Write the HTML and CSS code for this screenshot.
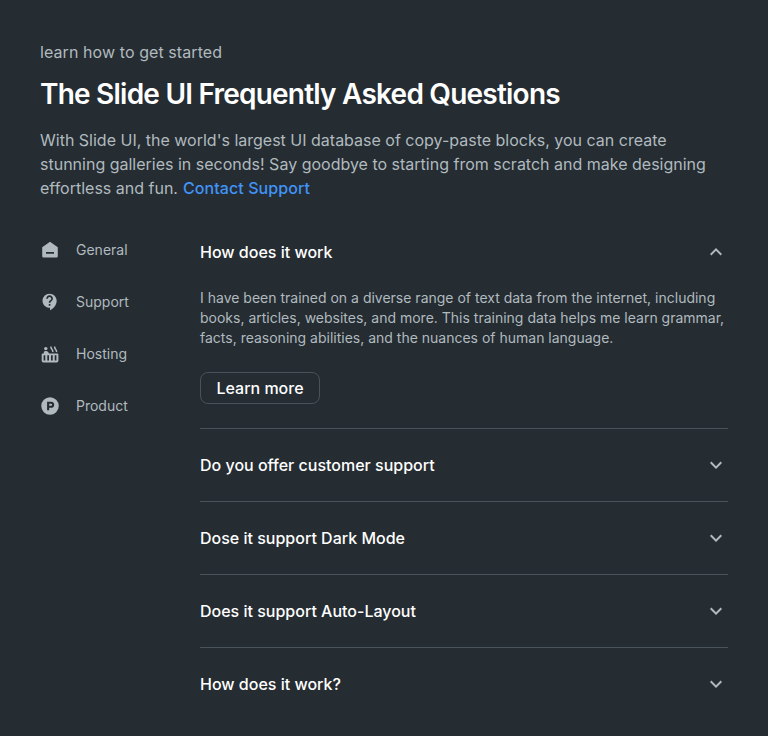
FILE: index.html
```html
<!DOCTYPE html>
<html lang="en">
<head>
<meta charset="utf-8">
<title>FAQ</title>
<link rel="stylesheet" href="styles.css">
</head>
<body>
<main class="faq">
  <header class="intro">
    <p class="eyebrow">learn how to get started</p>
    <h1 class="title">The Slide UI Frequently Asked Questions</h1>
    <p class="lead">With Slide UI, the world's largest UI database of copy-paste blocks, you can create<br>stunning galleries in seconds! Say goodbye to starting from scratch and make designing<br>effortless and fun. <a class="link" href="#">Contact Support</a></p>
  </header>
  <div class="columns">
    <nav class="nav">
      <a class="nav-item" href="#"><svg class="icon" viewBox="0 0 20 20"><path fill-rule="evenodd" d="M10 1.700 17.800 7.200V16.200Q17.800 17.500 16.500 17.500H3.500Q2.200 17.500 2.200 16.200V7.200ZM6 12.100V13.800H14V12.100Z"/></svg><span class="label">General</span></a>
      <a class="nav-item" href="#"><svg class="icon" viewBox="0 0 24 24"><path d="M11.500 2C6.810 2 3 5.810 3 10.500S6.810 19 11.500 19h.500v3c4.860-2.340 8-7 8-11.500C20 5.810 16.190 2 11.500 2zm1 14.500h-2v-2h2v2zm0-3.500h-2c0-3.250 3-3 3-5 0-1.100-.900-2-2-2s-2 .900-2 2h-2c0-2.210 1.790-4 4-4s4 1.790 4 4c0 2.500-3 2.750-3 5z"/></svg><span class="label">Support</span></a>
      <a class="nav-item" href="#"><svg class="icon" viewBox="0 0 20 20"><circle cx="5.800" cy="4.600" r="1.700"/><path fill-rule="evenodd" d="M3.800 9.400V8.500Q3.800 7 5.300 7H6.200Q7 7 7.600 7.600L9.300 9.400H17.200Q18.400 9.400 18.400 10.600V16.800Q18.400 18.500 16.700 18.500H3.400Q1.700 18.500 1.700 16.800V10.600Q1.700 9.400 2.900 9.400ZM3.600 11.300V16.500H5.300V11.300ZM7.300 11.300V16.500H9V11.300ZM11 11.300V16.500H12.700V11.300ZM14.700 11.300V16.500H16.400V11.300Z"/><path class="steam" d="M10.900 2.500c-.3 2.900 2.300 2.500 2 5.600M14.600 2.500c-.3 2.900 2.300 2.500 2 5.600"/></svg><span class="label">Hosting</span></a>
      <a class="nav-item" href="#"><svg class="icon" viewBox="0 0 24 24"><path fill-rule="evenodd" d="M12 1.500a10.500 10.500 0 1 0 0 21 10.500 10.500 0 0 0 0-21zM8.500 6.800h4.800a3.700 3.700 0 0 1 0 7.400h-2.300v3H8.500zM11 9.200v2.600h2.300a1.300 1.300 0 0 0 0-2.600z"/></svg><span class="label">Product</span></a>
    </nav>
    <section class="list">
      <article class="item open">
        <h2 class="question">How does it work<svg class="chevron" viewBox="0 0 24 24"><path d="m12 8-6 6 1.410 1.410L12 10.830l4.590 4.580L18 14z"/></svg></h2>
        <p class="answer">I have been trained on a diverse range of text data from the internet, including<br>books, articles, websites, and more. This training data helps me learn grammar,<br>facts, reasoning abilities, and the nuances of human language.</p>
        <button class="button">Learn more</button>
      </article>
      <article class="item"><h2 class="question">Do you offer customer support<svg class="chevron" viewBox="0 0 24 24"><path d="M16.590 8.590 12 13.170 7.410 8.590 6 10l6 6 6-6z"/></svg></h2></article>
      <article class="item"><h2 class="question">Dose it support Dark Mode<svg class="chevron" viewBox="0 0 24 24"><path d="M16.590 8.590 12 13.170 7.410 8.590 6 10l6 6 6-6z"/></svg></h2></article>
      <article class="item"><h2 class="question">Does it support Auto-Layout<svg class="chevron" viewBox="0 0 24 24"><path d="M16.590 8.590 12 13.170 7.410 8.590 6 10l6 6 6-6z"/></svg></h2></article>
      <article class="item"><h2 class="question">How does it work?<svg class="chevron" viewBox="0 0 24 24"><path d="M16.590 8.590 12 13.170 7.410 8.590 6 10l6 6 6-6z"/></svg></h2></article>
    </section>
  </div>
</main>
</body>
</html>
```
FILE: styles.css
```css
* { box-sizing: border-box; margin: 0; padding: 0; }
body { background: #252c32; color: #fff; font-family: Inter, sans-serif; }
.faq { height: 736px; padding: 40px; overflow: hidden; }
.eyebrow { font-size: 16px; line-height: 24px; letter-spacing: 0.08px; color: #b0babf; }
.title { margin-top: 8px; font-size: 28px; line-height: 44px; font-weight: 600; letter-spacing: -0.78px; white-space: nowrap; }
.lead { margin-top: 12px; font-size: 16px; line-height: 24px; color: #b0babf; white-space: nowrap; }
.link { margin-left: 0.5px; color: #4094f7; font-weight: 500; letter-spacing: 0.08px; text-decoration: none; }
.columns { display: flex; margin-top: 40px; }
.nav { width: 160px; display: flex; flex-direction: column; gap: 32px; }
.nav-item { display: flex; align-items: center; gap: 16px; height: 20px; font-size: 14px; color: #b0babf; text-decoration: none; }
.label { line-height: 20px; }
.icon { width: 20px; height: 20px; fill: #b0babf; }
.steam { fill: none; stroke: #b0babf; stroke-width: 1.5; }
.list { width: 528px; }
.item { height: 73px; padding-top: 24px; border-bottom: 1px solid #48535b; }
.item:last-child { border-bottom: 0; }
.item.open { height: 189px; padding-top: 0; }
.question { display: flex; align-items: center; justify-content: space-between; height: 24px; font-size: 16px; font-weight: 500; }
.chevron { width: 24px; height: 24px; fill: #b0babf; }
.answer { margin-top: 24px; font-size: 14px; line-height: 20px; color: #b0babf; white-space: nowrap; }
.button { display: block; width: 120px; height: 32px; margin-top: 24px; border: 1px solid #48535b; border-radius: 8px; background: transparent; color: #fff; font: 500 16px/24px Inter, sans-serif; }
```
